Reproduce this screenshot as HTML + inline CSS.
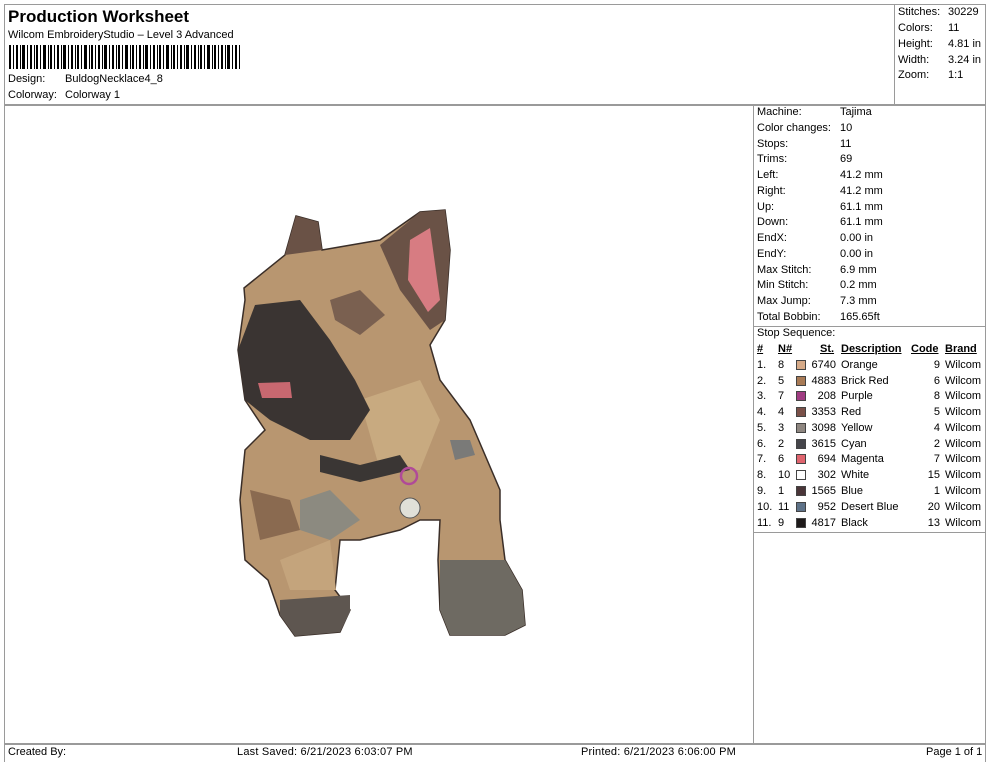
<!DOCTYPE html>
<html><head><style>
*{margin:0;padding:0;box-sizing:border-box}
body{width:990px;height:762px;background:#fff;position:relative;overflow:hidden;font-family:"Liberation Sans",Arial,sans-serif;color:#000}
.a{position:absolute;white-space:nowrap}
.ln{position:absolute;background:#9a9a9a}
.s{font-size:11px}
.r{font-size:11px;position:absolute;white-space:nowrap}
.sw{position:absolute;width:10px;height:10px;border:1px solid #444}
#t{position:absolute;left:0;top:1px;width:990px;height:740px}
</style></head><body>
<div class="ln" style="left:4px;top:4px;width:982px;height:1px"></div>
<div class="ln" style="left:4px;top:4px;width:1px;height:758px"></div>
<div class="ln" style="left:985px;top:4px;width:1px;height:758px"></div>
<div class="ln" style="left:4px;top:104px;width:982px;height:2px"></div>
<div class="ln" style="left:894px;top:4px;width:1px;height:100px"></div>
<div class="ln" style="left:753px;top:104px;width:1px;height:640px"></div>
<div class="ln" style="left:753px;top:326px;width:233px;height:1px"></div>
<div class="ln" style="left:753px;top:532px;width:233px;height:1px"></div>
<div class="ln" style="left:4px;top:743px;width:982px;height:2px"></div>

<svg class="a" style="left:0;top:0" width="753" height="742">
<path d="M296 216 L318 222 L322 250 L380 240 L420 212 L445 210 L450 250 L445 320 L430 345 L440 380 L470 420 L500 490 L500 520 L505 560 L522 590 L525 625 L505 635 L450 635 L440 610 L438 560 L440 520 L420 520 L400 530 L360 540 L340 540 L335 590 L350 610 L340 632 L295 636 L280 615 L268 580 L245 560 L240 500 L245 450 L265 430 L245 400 L238 350 L245 300 L244 288 L285 255 Z" fill="#b89670" stroke="#3a2e28" stroke-width="1.5"/>
<path d="M360 400 L420 380 L440 420 L420 470 L380 470 Z" fill="#c8aa80"/>
<path d="M280 560 L330 540 L336 590 L290 590 Z" fill="#c4a47c"/>
<path d="M420 212 L445 210 L450 250 L445 320 L430 330 L400 290 L380 245 Z" fill="#6a5246"/>
<path d="M410 240 L430 228 L440 300 L428 312 L408 280 Z" fill="#d77c82"/>
<path d="M296 216 L318 222 L322 250 L285 255 Z" fill="#6a5246"/>
<path d="M255 305 L300 300 L330 340 L355 380 L370 410 L350 440 L310 440 L270 420 L245 400 L238 350 Z" fill="#3a3432"/>
<path d="M258 383 L290 382 L292 398 L262 398 Z" fill="#c86870"/>
<path d="M330 300 L360 290 L385 315 L360 335 L335 320 Z" fill="#7a6050"/>
<path d="M320 455 L360 465 L400 455 L410 470 L360 482 L320 472 Z" fill="#3a3634"/>
<path d="M300 500 L330 490 L360 520 L330 540 L300 530 Z" fill="#8c8a80"/>
<path d="M440 560 L505 560 L522 590 L525 625 L505 635 L450 635 L440 610 Z" fill="#6e6a62"/>
<path d="M280 600 L350 595 L350 612 L340 632 L295 636 L280 615 Z" fill="#5e5650"/>
<path d="M250 490 L290 500 L300 530 L260 540 Z" fill="#8a6a50"/>
<path d="M450 440 L470 440 L475 455 L455 460 Z" fill="#7a7a78"/>
<circle cx="409" cy="476" r="8" fill="none" stroke="#b04a98" stroke-width="2.5"/>
<circle cx="410" cy="508" r="10" fill="#e0e0d8" stroke="#555"/>
</svg>

<div id="t">
<div class="a" style="left:8px;top:6px;font-size:17px;font-weight:bold">Production Worksheet</div>
<div class="a s" style="left:8px;top:28px">Wilcom EmbroideryStudio – Level 3 Advanced</div>
<svg class="a" style="left:9px;top:44px" width="231" height="24">
<g fill="#000">
<rect x="0" width="2" height="24"/><rect x="4" width="1" height="24"/><rect x="7" width="2" height="24"/><rect x="11" width="1" height="24"/><rect x="13" width="3" height="24"/><rect x="18" width="1" height="24"/><rect x="21" width="2" height="24"/><rect x="25" width="1" height="24"/><rect x="27" width="2" height="24"/><rect x="31" width="1" height="24"/><rect x="34" width="3" height="24"/><rect x="39" width="1" height="24"/><rect x="41" width="2" height="24"/><rect x="45" width="1" height="24"/><rect x="48" width="2" height="24"/><rect x="52" width="1" height="24"/><rect x="54" width="3" height="24"/><rect x="59" width="1" height="24"/><rect x="62" width="2" height="24"/><rect x="66" width="1" height="24"/><rect x="68" width="2" height="24"/><rect x="72" width="1" height="24"/><rect x="75" width="3" height="24"/><rect x="80" width="1" height="24"/><rect x="82" width="2" height="24"/><rect x="86" width="1" height="24"/><rect x="89" width="2" height="24"/><rect x="93" width="1" height="24"/><rect x="95" width="3" height="24"/><rect x="100" width="1" height="24"/><rect x="103" width="2" height="24"/><rect x="107" width="1" height="24"/><rect x="109" width="2" height="24"/><rect x="113" width="1" height="24"/><rect x="116" width="3" height="24"/><rect x="121" width="1" height="24"/><rect x="123" width="2" height="24"/><rect x="127" width="1" height="24"/><rect x="130" width="2" height="24"/><rect x="134" width="1" height="24"/><rect x="136" width="3" height="24"/><rect x="141" width="1" height="24"/><rect x="144" width="2" height="24"/><rect x="148" width="1" height="24"/><rect x="150" width="2" height="24"/><rect x="154" width="1" height="24"/><rect x="157" width="3" height="24"/><rect x="162" width="1" height="24"/><rect x="164" width="2" height="24"/><rect x="168" width="1" height="24"/><rect x="171" width="2" height="24"/><rect x="175" width="1" height="24"/><rect x="177" width="3" height="24"/><rect x="182" width="1" height="24"/><rect x="185" width="2" height="24"/><rect x="189" width="1" height="24"/><rect x="191" width="2" height="24"/><rect x="195" width="1" height="24"/><rect x="198" width="3" height="24"/><rect x="203" width="1" height="24"/><rect x="205" width="2" height="24"/><rect x="209" width="1" height="24"/><rect x="212" width="2" height="24"/><rect x="216" width="1" height="24"/><rect x="218" width="3" height="24"/><rect x="223" width="1" height="24"/><rect x="226" width="2" height="24"/><rect x="230" width="1" height="24"/>
</g></svg>
<div class="a s" style="left:8px;top:72px">Design:</div>
<div class="a s" style="left:65px;top:72px">BuldogNecklace4_8</div>
<div class="a s" style="left:8px;top:88px">Colorway:</div>
<div class="a s" style="left:65px;top:88px">Colorway 1</div>

<div class="r" style="left:898px;top:5px">Stitches:</div><div class="r" style="left:948px;top:5px">30229</div>
<div class="r" style="left:898px;top:21px">Colors:</div><div class="r" style="left:948px;top:21px">11</div>
<div class="r" style="left:898px;top:37px">Height:</div><div class="r" style="left:948px;top:37px">4.81 in</div>
<div class="r" style="left:898px;top:53px">Width:</div><div class="r" style="left:948px;top:53px">3.24 in</div>
<div class="r" style="left:898px;top:68px">Zoom:</div><div class="r" style="left:948px;top:68px">1:1</div>

<div class="r" style="left:757px;top:105px">Machine:</div><div class="r" style="left:840px;top:105px">Tajima</div>
<div class="r" style="left:757px;top:121px">Color changes:</div><div class="r" style="left:840px;top:121px">10</div>
<div class="r" style="left:757px;top:137px">Stops:</div><div class="r" style="left:840px;top:137px">11</div>
<div class="r" style="left:757px;top:152px">Trims:</div><div class="r" style="left:840px;top:152px">69</div>
<div class="r" style="left:757px;top:168px">Left:</div><div class="r" style="left:840px;top:168px">41.2 mm</div>
<div class="r" style="left:757px;top:184px">Right:</div><div class="r" style="left:840px;top:184px">41.2 mm</div>
<div class="r" style="left:757px;top:200px">Up:</div><div class="r" style="left:840px;top:200px">61.1 mm</div>
<div class="r" style="left:757px;top:215px">Down:</div><div class="r" style="left:840px;top:215px">61.1 mm</div>
<div class="r" style="left:757px;top:231px">EndX:</div><div class="r" style="left:840px;top:231px">0.00 in</div>
<div class="r" style="left:757px;top:247px">EndY:</div><div class="r" style="left:840px;top:247px">0.00 in</div>
<div class="r" style="left:757px;top:263px">Max Stitch:</div><div class="r" style="left:840px;top:263px">6.9 mm</div>
<div class="r" style="left:757px;top:278px">Min Stitch:</div><div class="r" style="left:840px;top:278px">0.2 mm</div>
<div class="r" style="left:757px;top:294px">Max Jump:</div><div class="r" style="left:840px;top:294px">7.3 mm</div>
<div class="r" style="left:757px;top:310px">Total Bobbin:</div><div class="r" style="left:840px;top:310px">165.65ft</div>
<div class="r" style="left:757px;top:326px">Stop Sequence:</div>

<div class="r" style="left:757px;top:342px;font-weight:bold;text-decoration:underline">#</div>
<div class="r" style="left:778px;top:342px;font-weight:bold;text-decoration:underline">N#</div>
<div class="r" style="left:820px;top:342px;font-weight:bold;text-decoration:underline">St.</div>
<div class="r" style="left:841px;top:342px;font-weight:bold;text-decoration:underline">Description</div>
<div class="r" style="left:911px;top:342px;font-weight:bold;text-decoration:underline">Code</div>
<div class="r" style="left:945px;top:342px;font-weight:bold;text-decoration:underline">Brand</div>

<div class="r" style="left:757px;top:358px">1.</div><div class="r" style="left:778px;top:358px">8</div><div class="sw" style="left:796px;top:359px;background:#d6aa88"></div><div class="r" style="left:809px;top:358px;width:27px;text-align:right">6740</div><div class="r" style="left:841px;top:358px">Orange</div><div class="r" style="left:905px;top:358px;width:35px;text-align:right">9</div><div class="r" style="left:945px;top:358px">Wilcom</div>
<div class="r" style="left:757px;top:374px">2.</div><div class="r" style="left:778px;top:374px">5</div><div class="sw" style="left:796px;top:375px;background:#a87a55"></div><div class="r" style="left:809px;top:374px;width:27px;text-align:right">4883</div><div class="r" style="left:841px;top:374px">Brick Red</div><div class="r" style="left:905px;top:374px;width:35px;text-align:right">6</div><div class="r" style="left:945px;top:374px">Wilcom</div>
<div class="r" style="left:757px;top:389px">3.</div><div class="r" style="left:778px;top:389px">7</div><div class="sw" style="left:796px;top:390px;background:#a03c82"></div><div class="r" style="left:809px;top:389px;width:27px;text-align:right">208</div><div class="r" style="left:841px;top:389px">Purple</div><div class="r" style="left:905px;top:389px;width:35px;text-align:right">8</div><div class="r" style="left:945px;top:389px">Wilcom</div>
<div class="r" style="left:757px;top:405px">4.</div><div class="r" style="left:778px;top:405px">4</div><div class="sw" style="left:796px;top:406px;background:#7a5048"></div><div class="r" style="left:809px;top:405px;width:27px;text-align:right">3353</div><div class="r" style="left:841px;top:405px">Red</div><div class="r" style="left:905px;top:405px;width:35px;text-align:right">5</div><div class="r" style="left:945px;top:405px">Wilcom</div>
<div class="r" style="left:757px;top:421px">5.</div><div class="r" style="left:778px;top:421px">3</div><div class="sw" style="left:796px;top:422px;background:#8e8680"></div><div class="r" style="left:809px;top:421px;width:27px;text-align:right">3098</div><div class="r" style="left:841px;top:421px">Yellow</div><div class="r" style="left:905px;top:421px;width:35px;text-align:right">4</div><div class="r" style="left:945px;top:421px">Wilcom</div>
<div class="r" style="left:757px;top:437px">6.</div><div class="r" style="left:778px;top:437px">2</div><div class="sw" style="left:796px;top:438px;background:#45454a"></div><div class="r" style="left:809px;top:437px;width:27px;text-align:right">3615</div><div class="r" style="left:841px;top:437px">Cyan</div><div class="r" style="left:905px;top:437px;width:35px;text-align:right">2</div><div class="r" style="left:945px;top:437px">Wilcom</div>
<div class="r" style="left:757px;top:452px">7.</div><div class="r" style="left:778px;top:452px">6</div><div class="sw" style="left:796px;top:453px;background:#e0646e"></div><div class="r" style="left:809px;top:452px;width:27px;text-align:right">694</div><div class="r" style="left:841px;top:452px">Magenta</div><div class="r" style="left:905px;top:452px;width:35px;text-align:right">7</div><div class="r" style="left:945px;top:452px">Wilcom</div>
<div class="r" style="left:757px;top:468px">8.</div><div class="r" style="left:778px;top:468px">10</div><div class="sw" style="left:796px;top:469px;background:#fff"></div><div class="r" style="left:809px;top:468px;width:27px;text-align:right">302</div><div class="r" style="left:841px;top:468px">White</div><div class="r" style="left:905px;top:468px;width:35px;text-align:right">15</div><div class="r" style="left:945px;top:468px">Wilcom</div>
<div class="r" style="left:757px;top:484px">9.</div><div class="r" style="left:778px;top:484px">1</div><div class="sw" style="left:796px;top:485px;background:#4a3538"></div><div class="r" style="left:809px;top:484px;width:27px;text-align:right">1565</div><div class="r" style="left:841px;top:484px">Blue</div><div class="r" style="left:905px;top:484px;width:35px;text-align:right">1</div><div class="r" style="left:945px;top:484px">Wilcom</div>
<div class="r" style="left:757px;top:500px">10.</div><div class="r" style="left:778px;top:500px">11</div><div class="sw" style="left:796px;top:501px;background:#5e7288"></div><div class="r" style="left:809px;top:500px;width:27px;text-align:right">952</div><div class="r" style="left:841px;top:500px">Desert Blue</div><div class="r" style="left:905px;top:500px;width:35px;text-align:right">20</div><div class="r" style="left:945px;top:500px">Wilcom</div>
<div class="r" style="left:757px;top:516px">11.</div><div class="r" style="left:778px;top:516px">9</div><div class="sw" style="left:796px;top:517px;background:#1e1a1a"></div><div class="r" style="left:809px;top:516px;width:27px;text-align:right">4817</div><div class="r" style="left:841px;top:516px">Black</div><div class="r" style="left:905px;top:516px;width:35px;text-align:right">13</div><div class="r" style="left:945px;top:516px">Wilcom</div>
</div>

<div class="a" style="left:8px;top:746px;font-size:11px">Created By:</div>
<div class="a" style="left:237px;top:746px;font-size:11px;letter-spacing:0.2px">Last Saved: 6/21/2023 6:03:07 PM</div>
<div class="a" style="left:581px;top:746px;font-size:11px;letter-spacing:0.2px">Printed: 6/21/2023 6:06:00 PM</div>
<div class="a" style="left:926px;top:746px;font-size:11px">Page 1 of 1</div>
</body></html>
